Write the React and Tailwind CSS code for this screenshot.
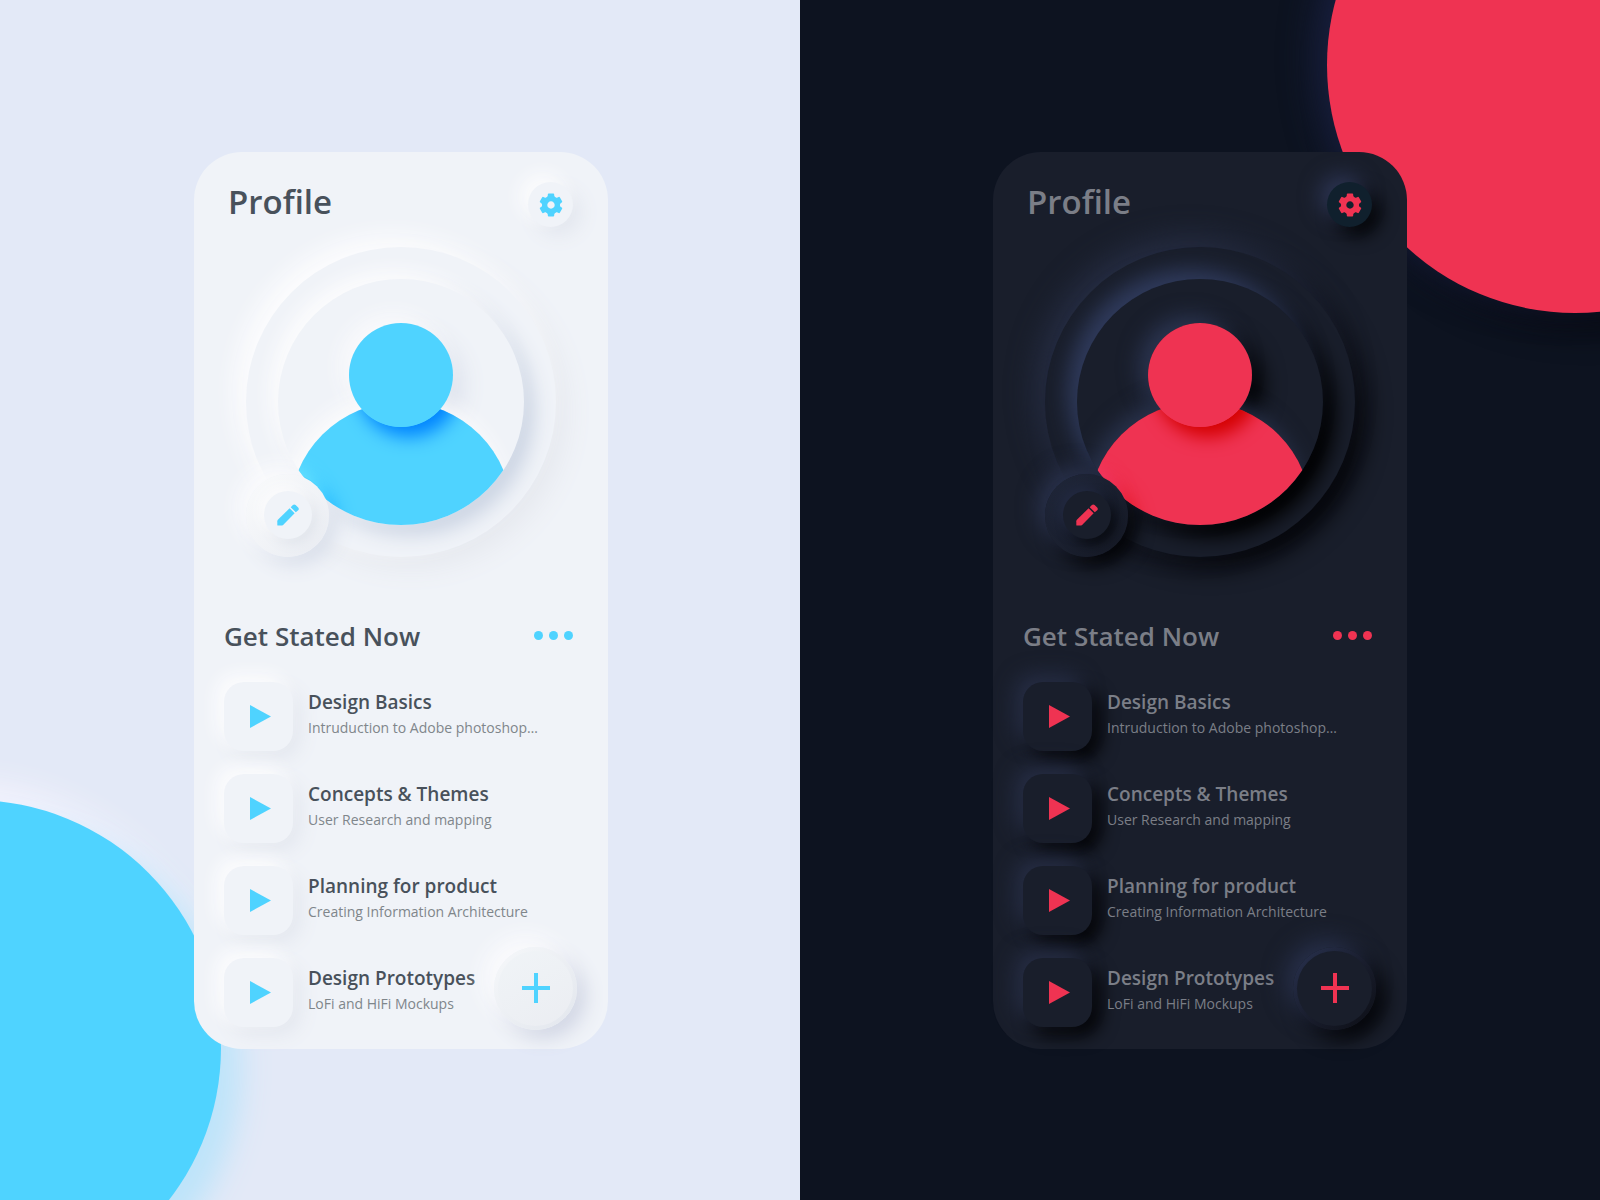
import React from "react";

const lessons = [
  { title: "Design Basics", detail: "Intruduction to Adobe photoshop…" },
  { title: "Concepts & Themes", detail: "User Research and mapping" },
  { title: "Planning for product", detail: "Creating Information Architecture" },
  { title: "Design Prototypes", detail: "LoFi and HiFi Mockups" },
];

const light = {
  page: "bg-[#e3e9f7] pl-0.5",
  blob: "-bottom-24 -left-[275px] bg-[#4fd3ff] shadow-[20px_20px_30px_#bde4fa,-12px_-12px_36px_#faf6ff]",
  card: "bg-[#f0f3f8]",
  heading: "text-[#48515b]",
  detail: "text-[#7f868b]",
  accentText: "text-[#4fd3ff]",
  accent: "bg-[#4fd3ff]",
  gear: "bg-[#f0f3f8] shadow-[-8px_-8px_18px_#fcfcfd,8px_8px_20px_#e2e6ee]",
  ring: "bg-[#f0f3f8] shadow-[-10px_-10px_24px_#fdfdfe,10px_10px_28px_#e5e8ee]",
  disc: "bg-[#f0f3f8] shadow-[-8px_-8px_18px_#fcfcfd,10px_10px_20px_#cbd4e3]",
  headGlow: "shadow-[-8px_-8px_20px_#fafafc,10px_10px_24px_#dce1ec]",
  bodyGlow: "shadow-[-6px_-8px_20px_#fbfbfc]",
  headShade: "shadow-[8px_10px_18px_#0084ff]",
  editShade: "shadow-[-6px_-8px_16px_#6be6ff,8px_8px_18px_#16b0ff]",
  editGlow: "shadow-[-8px_-8px_20px_#fbfbfd,8px_8px_20px_#d8deea]",
  edit: "bg-[linear-gradient(135deg,#fafbfc,#e9ecf2)]",
  editInner: "bg-[#f0f3f8] shadow-[-5px_-5px_12px_#fbfbfc,5px_5px_12px_#e1e5ec]",
  tile: "bg-[#f0f3f8] shadow-[-7px_-7px_18px_#fdfdfe,7px_7px_20px_#e2e6ee]",
  add: "bg-[linear-gradient(135deg,#f6f8fa,#e2e6ed)] shadow-[-10px_-10px_22px_#fbfbfd,8px_8px_20px_#cfd4e3]",
  addInner: "bg-[linear-gradient(150deg,#f0f4f7,#ebedf2)]",
};

const dark = {
  page: "bg-[#0d1320]",
  blob: "-top-[183px] -right-[223px] bg-[#ef3352] shadow-[-12px_-8px_34px_#192040,12px_12px_34px_#05060b]",
  card: "bg-[#191e2b]",
  heading: "text-[#7b7e87]",
  detail: "text-[#7b7e87]",
  accentText: "text-[#ef3352]",
  accent: "bg-[#ef3352]",
  gear: "bg-[#10202d] shadow-[-8px_-8px_20px_#2b3350,8px_8px_18px_#020304]",
  ring: "bg-[#191e2b] shadow-[-10px_-10px_28px_#262d43,10px_10px_24px_#020204]",
  disc: "bg-[#191e2b] shadow-[-10px_-10px_20px_#2f3a5b,12px_12px_20px_#000000]",
  headGlow: "shadow-[-10px_-8px_20px_#2a334e,10px_10px_22px_#000000]",
  bodyGlow: "shadow-[-6px_-8px_20px_#28314a]",
  headShade: "shadow-[8px_10px_18px_#d40000]",
  editShade: "shadow-[-6px_-8px_16px_#f23a68,8px_8px_18px_#e3121d]",
  editGlow: "shadow-[-8px_-8px_20px_#29314b,8px_8px_18px_#020203]",
  edit: "bg-[linear-gradient(135deg,#20273a,#151925)]",
  editInner: "bg-[#191e2b] shadow-[-5px_-5px_12px_#222940,5px_5px_12px_#080a0f]",
  tile: "bg-[#191e2b] shadow-[-8px_-8px_20px_#262d44,8px_8px_18px_#020203]",
  add: "bg-[linear-gradient(135deg,#293250,#181c2b_55%,#0c0e15)] shadow-[-8px_-8px_22px_#272f49,8px_8px_20px_#010102]",
  addInner: "bg-[#191e2b]",
};

const toothAngles = [0, 60, 120, 180, 240, 300];

function GearIcon() {
  return (
    <svg viewBox="-12 -12 24 24" className="size-6" fill="currentColor" aria-hidden="true">
      <circle r="6.200" fill="none" stroke="currentColor" strokeWidth="5" />
      {toothAngles.map((angle) => (
        <path
          key={angle}
          transform={`rotate(${angle})`}
          d="M-5.500-6.500Q-3.500-8-3.200-9.500V-10.600Q-3.100-11.500-2.300-11.500H2.300Q3.100-11.500 3.200-10.600V-9.500Q3.500-8 5.500-6.500Z"
        />
      ))}
    </svg>
  );
}

function PencilIcon() {
  return (
    <svg viewBox="0 0 22 22" className="size-[22px]" fill="currentColor" aria-hidden="true">
      <path d="M12.600 4.300 17.600 9.300 6.600 20.400C6 21 5.400 21.500 4.500 21.500H.9C.5 21.500.3 21.300.3 20.900V17.200C.3 16.500.6 16.100 1.100 15.600Z" />
      <path d="M13.700 3.200 15.900 1C16.700.2 17.800.2 18.600 1L21.200 3.600C22 4.400 22 5.400 21.200 6.200L18.800 8.300Z" />
    </svg>
  );
}

function Avatar({ t }) {
  return (
    <div className="relative z-10 col-start-1 row-start-1 flex size-[246px] flex-col items-center overflow-hidden rounded-full">
      <div className={`mt-11 size-[104px] shrink-0 rounded-full ${t.headGlow}`} />
      <div className={`-mt-[25px] size-[222px] shrink-0 rounded-full ${t.bodyGlow}`}>
        <div className={`relative size-full overflow-hidden rounded-full ${t.accent}`}>
          <div className={`absolute -top-[79px] left-[59px] size-[104px] rounded-full ${t.headShade}`} />
          <div className={`absolute top-[71px] -left-[44px] size-[83px] rounded-full ${t.editShade}`} />
        </div>
      </div>
      <div className={`absolute top-11 size-[104px] rounded-full ${t.accent}`} />
    </div>
  );
}

function ProfileCard({ t }) {
  return (
    <article className={`relative w-full max-w-[414px] rounded-[48px] pt-[30px] pb-[22px] ${t.card}`}>
      <header className="flex items-center justify-between pr-[35px] pl-[34px]">
        <h1 className={`pb-1.5 text-[33px] leading-10 font-semibold ${t.heading}`}>Profile</h1>
        <button
          type="button"
          aria-label="Settings"
          className={`flex size-[45px] items-center justify-center rounded-full ${t.gear} ${t.accentText}`}
        >
          <GearIcon />
        </button>
      </header>

      <div className={`mx-auto mt-[19px] grid size-[310px] place-items-center rounded-full ${t.ring}`}>
        <div className={`col-start-1 row-start-1 size-[246px] rounded-full ${t.disc}`} />
        <div
          className={`col-start-1 row-start-1 size-[83px] self-end justify-self-start rounded-full ${t.editGlow}`}
        />
        <Avatar t={t} />
        <button
          type="button"
          aria-label="Edit profile picture"
          className={`z-20 col-start-1 row-start-1 flex size-[83px] items-center justify-center self-end justify-self-start rounded-full ${t.edit}`}
        >
          <span className={`flex size-12 items-center justify-center rounded-full ${t.editInner} ${t.accentText}`}>
            <PencilIcon />
          </span>
        </button>
      </div>

      <section className="mt-[61px] pr-[35px] pl-[30px]">
        <div className="flex items-center justify-between">
          <h2 className={`text-[26px] leading-9 font-semibold ${t.heading}`}>Get Stated Now</h2>
          <button type="button" aria-label="More options" className="flex gap-1.5">
            <span className={`size-[9px] rounded-full ${t.accent}`} />
            <span className={`size-[9px] rounded-full ${t.accent}`} />
            <span className={`size-[9px] rounded-full ${t.accent}`} />
          </button>
        </div>
        <ul className="mt-7 flex flex-col gap-[23px]">
          {lessons.map((lesson) => (
            <li key={lesson.title} className="flex items-center gap-[15px]">
              <button
                type="button"
                aria-label={`Play ${lesson.title}`}
                className={`flex size-[69px] shrink-0 items-center justify-center rounded-[20px] pl-1 ${t.tile} ${t.accentText}`}
              >
                <svg viewBox="0 0 21 23" className="h-[23px] w-[21px]" fill="currentColor" aria-hidden="true">
                  <path d="M0 0 21 11.500 0 23Z" />
                </svg>
              </button>
              <div className="pb-0.5">
                <h3 className={`text-[19px] leading-[26px] font-semibold ${t.heading}`}>{lesson.title}</h3>
                <p className={`text-sm leading-[26px] ${t.detail}`}>{lesson.detail}</p>
              </div>
            </li>
          ))}
        </ul>
      </section>

      <button
        type="button"
        aria-label="Add"
        className={`absolute right-[31px] bottom-[19px] flex size-[83px] items-center justify-center rounded-full ${t.add}`}
      >
        <span className={`flex size-[75px] items-center justify-center rounded-full ${t.addInner} ${t.accentText}`}>
          <svg viewBox="0 0 30 30" className="size-[30px]" fill="none" stroke="currentColor" strokeWidth="4" aria-hidden="true">
            <path d="M15 0V30M1 15H29" />
          </svg>
        </span>
      </button>
    </article>
  );
}

function Panel({ t }) {
  return (
    <section className={`relative flex items-center justify-center overflow-hidden py-10 ${t.page}`}>
      <div className={`absolute size-[496px] rounded-full ${t.blob}`} />
      <ProfileCard t={t} />
    </section>
  );
}

export default function App() {
  return (
    <main className="grid min-h-screen grid-cols-2 font-['Open_Sans',sans-serif]">
      <Panel t={light} />
      <Panel t={dark} />
    </main>
  );
}
